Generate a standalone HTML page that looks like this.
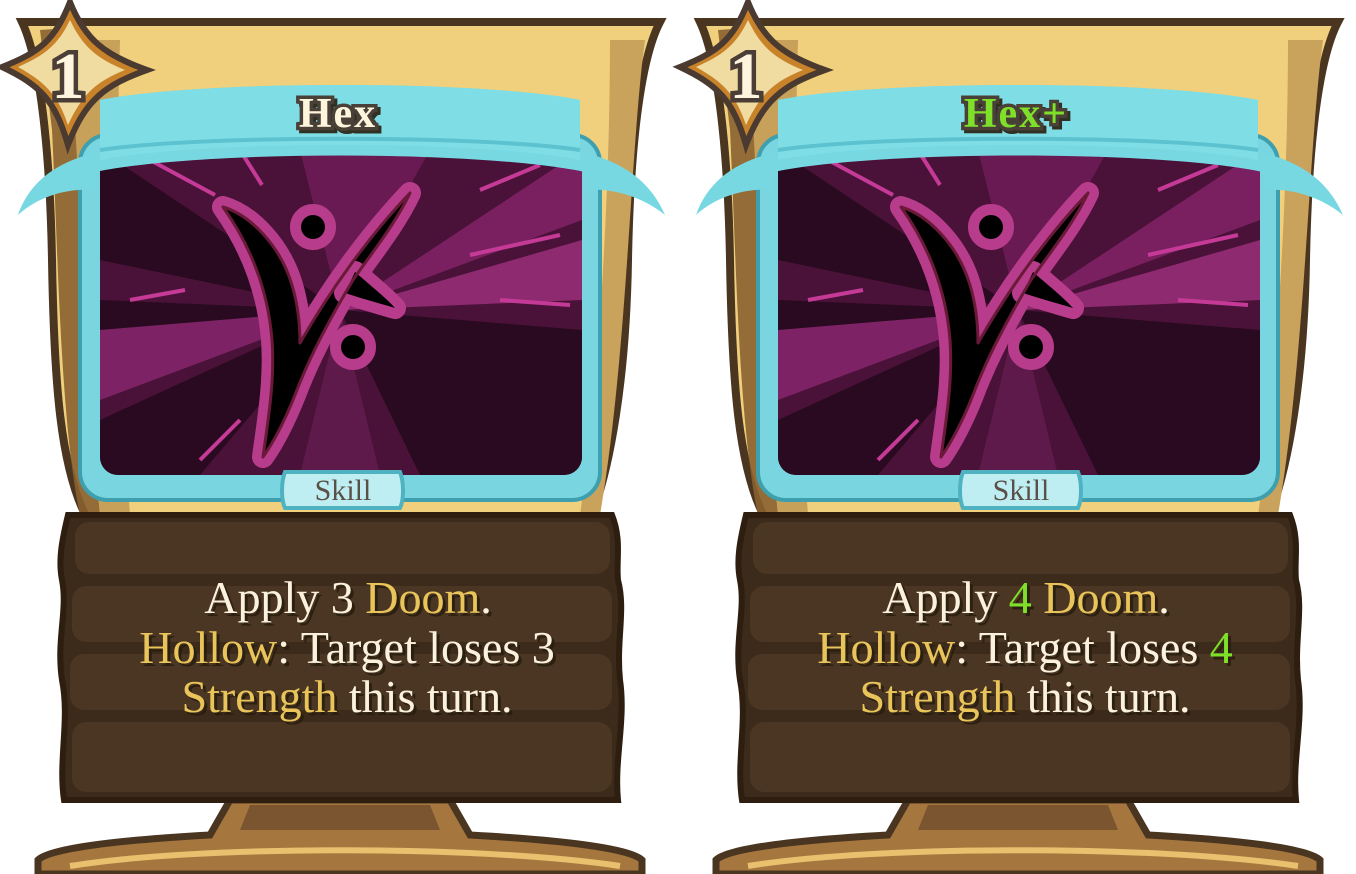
<!DOCTYPE html>
<html><head><meta charset="utf-8"><style>
html,body{margin:0;padding:0;background:#fff;}
svg{display:block}
.t{font-family:"Liberation Serif",serif;font-size:46px;text-anchor:middle;fill:#fbf1dc;}
.y{fill:#e8c45a}.g{fill:#7fe02a}
</style></head><body>
<svg width="1356" height="874" viewBox="0 0 1356 874" xmlns="http://www.w3.org/2000/svg">
<defs>
<filter id="ds" x="-10%" y="-10%" width="120%" height="130%"><feDropShadow dx="3" dy="3" stdDeviation="0" flood-color="#2a1a0e" flood-opacity="0.9"/></filter>
<clipPath id="art"><rect x="100" y="150" width="482" height="325" rx="18"/></clipPath>
<g id="card">
  <!-- pedestal -->
  <path d="M230,800 L450,800 L470,835 C560,840 630,848 642,860 L642,874 L38,874 L38,860 C50,848 120,840 210,835 Z" fill="#a5773f" stroke="#4a3520" stroke-width="7"/>
  <path d="M70,866 C200,845 480,845 620,866" fill="none" stroke="#e9c06e" stroke-width="6"/>
  <path d="M250,805 L430,805 L440,830 L240,830Z" fill="#7a5530"/>
  <!-- gold body -->
  <path d="M22,22 L660,22 C640,60 630,150 628,260 C626,380 610,470 590,520 L88,520 C60,470 54,380 52,260 C50,150 40,60 22,22 Z" fill="#f0d07c" stroke="#4a3520" stroke-width="8"/>
  <path d="M40,30 L70,28 C80,120 80,300 100,515 L80,515 C60,420 58,250 52,130 Z" fill="#8a6030" opacity=".9"/>
  <path d="M70,40 L120,40 C115,200 120,380 130,515 L100,515 C88,380 80,200 70,40Z" fill="#c7a05a"/>
  <path d="M610,40 L645,40 C630,150 628,350 600,515 L580,515 C600,380 610,180 610,40Z" fill="#c9a25c"/>
  <!-- art frame -->
  <rect x="80" y="135" width="520" height="365" rx="28" fill="#79d5e0" stroke="#3e9fae" stroke-width="4"/>
  <rect x="100" y="150" width="482" height="325" rx="18" fill="#4a1238"/>
  <g clip-path="url(#art)">
    <polygon points="340,310 100,150 100,260" fill="#2a0a20"/>
    <polygon points="340,310 100,300 100,380" fill="#2a0a20"/>
    <polygon points="340,310 100,420 100,475 200,475" fill="#2a0a20"/>
    <polygon points="340,310 582,330 582,475 420,475" fill="#2a0a20"/>
    <polygon points="340,310 582,150 582,220" fill="#7a2060"/>
    <polygon points="340,310 582,240 582,300" fill="#8e2a70"/>
    <polygon points="340,310 300,150 430,150" fill="#6a1a52"/>
    <polygon points="340,310 100,330 100,400" fill="#7e2266"/>
    <polygon points="340,310 380,475 300,475" fill="#5e1a4a"/>
    <path d="M150,160 L215,195 M240,150 L262,185 M540,165 L480,190 M560,235 L470,255 M570,305 L500,300 M130,300 L185,290 M200,460 L240,420" stroke="#c43a96" stroke-width="4"/>
  </g>
  <!-- symbol -->
  <g stroke="#b83c8c" stroke-width="22" stroke-linejoin="round" paint-order="stroke" fill="#000">
    <path d="M223,207 C250,215 280,245 292,285 C298,305 300,325 300,343 C330,290 370,235 410,193 C395,225 370,255 353,280 C335,310 310,355 295,395 C285,420 275,440 263,457 C268,420 275,380 272,340 C268,290 250,245 223,207Z"/>
    <path d="M355,272 C370,285 385,297 395,308 C378,303 360,298 345,293Z"/>
    <circle cx="313" cy="227" r="12"/>
    <circle cx="353" cy="347" r="12"/>
  </g>
  <g stroke="#6a1a38" stroke-width="3" fill="none" stroke-linejoin="round">
    <path d="M223,207 C250,215 280,245 292,285 C298,305 300,325 300,343 C330,290 370,235 410,193 C395,225 370,255 353,280 C335,310 310,355 295,395 C285,420 275,440 263,457 C268,420 275,380 272,340 C268,290 250,245 223,207Z"/>
  </g>
  <!-- banner -->
  <path d="M18,215 C30,180 60,160 100,152 L100,100 C200,80 480,80 580,100 L580,152 C620,160 650,180 665,215 C640,195 610,188 585,190 L585,172 C480,150 200,150 95,172 L95,190 C70,188 40,195 18,215 Z" fill="#78d8e2"/>
  <path d="M100,100 C200,80 480,80 580,100 L580,160 C480,140 200,140 100,160 Z" fill="#7fdde6"/>
  <path d="M100,150 C200,135 480,135 580,150" stroke="#5cc2cf" stroke-width="4" fill="none"/>
  <!-- skill tag -->
  <path d="M285,472 L400,472 C404,482 404,500 400,508 L285,508 C281,500 281,482 285,472Z" fill="#bfeef2" stroke="#4fb2c0" stroke-width="4"/>
  <text x="343" y="500" font-family="Liberation Serif,serif" font-size="30" fill="#5a5048" text-anchor="middle">Skill</text>
  <!-- wood -->
  <path d="M68,515 L612,515 C622,540 616,560 618,580 C626,610 616,640 620,680 C626,720 614,760 618,800 L64,800 C58,760 70,720 62,680 C56,640 68,610 62,580 C58,560 62,540 68,515Z" fill="#3c2a1a" stroke="#2e1e10" stroke-width="6"/>
  <g fill="#4a3622">
    <rect x="75" y="522" width="535" height="52" rx="14"/>
    <rect x="72" y="586" width="540" height="56" rx="14"/>
    <rect x="70" y="654" width="542" height="56" rx="14"/>
    <rect x="72" y="722" width="540" height="70" rx="14"/>
  </g>
  <!-- cost -->
  <path d="M70,2 C85,40 105,55 147,70 C105,85 85,100 68,145 C55,100 40,85 2,67 C40,52 55,40 70,2Z" fill="#c8822a" stroke="#4a3a30" stroke-width="6"/>
  <path d="M70,20 C82,45 95,58 125,70 C95,82 82,95 68,125 C58,95 45,82 18,67 C45,55 58,45 70,20Z" fill="#f0dca0"/>
  <text x="68" y="98" font-family="Liberation Serif,serif" font-weight="bold" font-size="66" fill="#fff4de" stroke="#4a3e36" stroke-width="9" paint-order="stroke" text-anchor="middle">1</text>
</g>
</defs>
<use href="#card"/>
<use href="#card" x="678"/>

<g font-family="Liberation Serif,serif" font-weight="bold" font-size="42" letter-spacing="2" stroke="#4a4038" stroke-width="7" paint-order="stroke" text-anchor="middle" filter="url(#ds)">
  <text x="338" y="127" fill="#fff5dc">Hex</text>
  <text x="1016" y="127" fill="#7fe02a">Hex+</text>
</g>

<g class="t" filter="url(#ds)">
  <text x="348" y="613">Apply 3 <tspan class="y">Doom</tspan>.</text>
  <text x="347" y="663"><tspan class="y">Hollow</tspan>: Target loses 3</text>
  <text x="347" y="712"><tspan class="y">Strength</tspan> this turn.</text>
  <text x="1026" y="613">Apply <tspan class="g">4</tspan> <tspan class="y">Doom</tspan>.</text>
  <text x="1025" y="663"><tspan class="y">Hollow</tspan>: Target loses <tspan class="g">4</tspan></text>
  <text x="1025" y="712"><tspan class="y">Strength</tspan> this turn.</text>
</g>
</svg>
</body></html>
